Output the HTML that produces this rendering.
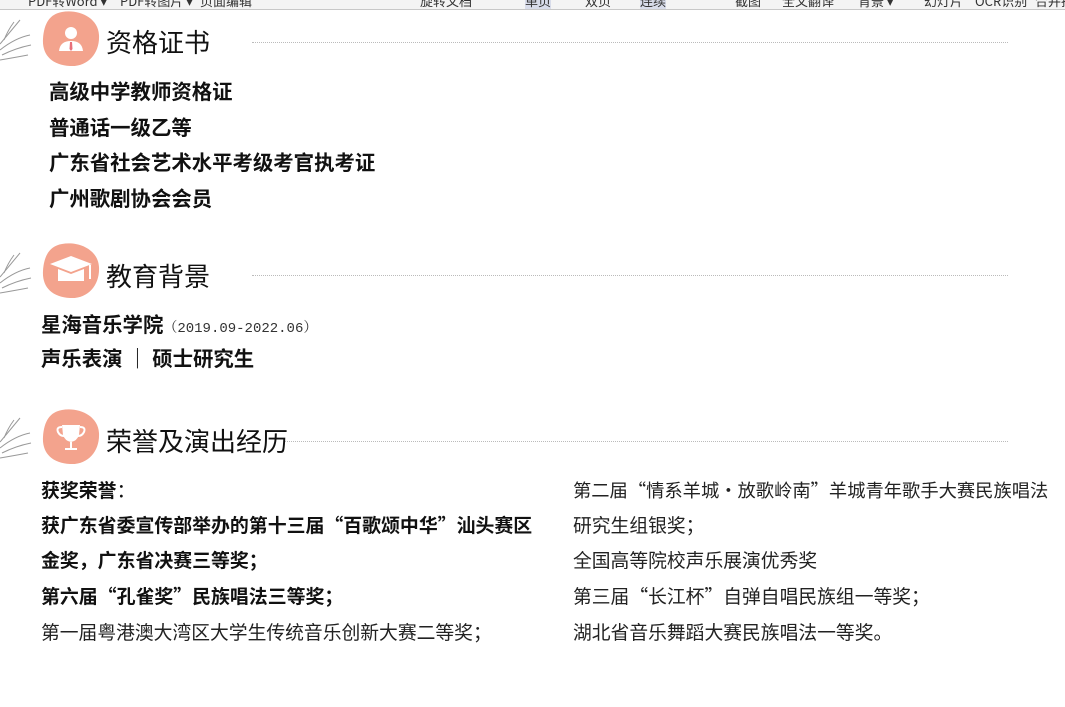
<!DOCTYPE html>
<html><head><meta charset="utf-8"><style>
*{margin:0;padding:0;box-sizing:border-box}
body{width:1065px;height:707px;background:#fff;position:relative;overflow:hidden;font-family:"Noto Sans CJK SC","Liberation Sans",sans-serif;color:#111}
.tb{position:absolute;left:0;top:0;width:1065px;height:10px;background:#f4f4f4;border-bottom:1px solid #c8c8c8;overflow:hidden}
.tb span{position:absolute;top:-9px;font-size:13px;color:#333;white-space:nowrap}
.a{position:absolute;white-space:nowrap}
.t{font-size:26px;color:#111;line-height:30px}
.dl{position:absolute;height:0;border-top:1px dotted #bbb}
.b{font-weight:bold;font-size:20.4px;line-height:24px}
.b2{font-weight:bold;font-size:18.9px;line-height:24px}
.r{font-size:18.8px;line-height:24px;color:#222}
.blob{position:absolute;width:58px;height:56px}
</style></head><body>
<div class="tb">
<span style="left:28px">PDF转Word ▾</span><span style="left:120px">PDF转图片 ▾</span><span style="left:200px">页面编辑</span>
<span style="left:420px">旋转文档</span><span style="left:525px;background:#d8dcea">单页</span><span style="left:585px">双页</span><span style="left:640px;background:#d8dcea">连续</span>
<span style="left:735px">截图</span><span style="left:782px">全文翻译</span><span style="left:858px">背景 ▾</span><span style="left:924px">幻灯片</span><span style="left:975px">OCR识别</span><span style="left:1035px">合并拆分</span>
</div>

<svg class="a" style="left:0;top:0" width="40" height="707" fill="none" stroke="#999" stroke-width="1">
<g><path d="M0 50 Q15 38 30 35"/><path d="M2 55 Q16 48 31 45"/><path d="M0 44 Q10 32 20 20"/><path d="M0 60 Q12 58 28 55"/><path d="M4 40 Q8 30 14 22"/></g>
<g transform="translate(0,233)"><path d="M0 50 Q15 38 30 35"/><path d="M2 55 Q16 48 31 45"/><path d="M0 44 Q10 32 20 20"/><path d="M0 60 Q12 58 28 55"/><path d="M4 40 Q8 30 14 22"/></g>
<g transform="translate(0,398)"><path d="M0 50 Q15 38 30 35"/><path d="M2 55 Q16 48 31 45"/><path d="M0 44 Q10 32 20 20"/><path d="M0 60 Q12 58 28 55"/><path d="M4 40 Q8 30 14 22"/></g>
</svg>

<svg class="blob" style="left:42px;top:11px" viewBox="0 0 58 56"><path d="M20 1 C36 -2 56 6 57 24 C58 42 46 56 28 55 C10 54 0 44 1 28 C2 12 8 3 20 1Z" fill="#f3a38d"/>
<circle cx="29" cy="22" r="6" fill="#fff"/><path d="M17 40 Q18 30 29 30 Q40 30 41 40Z" fill="#fff"/><path d="M28 31 L30 31 L30.5 38 L29 40 L27.5 38Z" fill="#e8707a"/></svg>
<div class="a t" style="left:106px;top:27px">资格证书</div>
<div class="dl" style="left:252px;top:42px;width:756px"></div>
<div class="a b" style="left:49px;top:78px">高级中学教师资格证</div>
<div class="a b" style="left:49px;top:114px">普通话一级乙等</div>
<div class="a b" style="left:49px;top:149px">广东省社会艺术水平考级考官执考证</div>
<div class="a b" style="left:49px;top:185px">广州歌剧协会会员</div>

<svg class="blob" style="left:42px;top:243px" viewBox="0 0 58 56"><path d="M20 1 C36 -2 56 6 57 24 C58 42 46 56 28 55 C10 54 0 44 1 28 C2 12 8 3 20 1Z" fill="#f3a38d"/>
<path d="M8 21 L29 13 L50 21 L29 29Z" fill="#fff"/><path d="M16 26 L16 38 L42 38 L42 26 L29 31Z" fill="#fff"/><path d="M48 22 L48 36" stroke="#fff" stroke-width="2"/></svg>
<div class="a t" style="left:106px;top:261px">教育背景</div>
<div class="dl" style="left:252px;top:275px;width:756px"></div>
<div class="a b" style="left:41px;top:311px">星海音乐学院<span style="font-weight:normal;font-size:14px;font-family:'Liberation Mono','Noto Serif CJK SC',monospace;color:#333">（2019.09-2022.06）</span></div>
<div class="a b" style="left:41px;top:345px">声乐表演 ｜ 硕士研究生</div>

<svg class="blob" style="left:42px;top:409px" viewBox="0 0 58 56"><path d="M20 1 C36 -2 56 6 57 24 C58 42 46 56 28 55 C10 54 0 44 1 28 C2 12 8 3 20 1Z" fill="#f3a38d"/>
<path d="M20 16 L38 16 L37 26 Q35 32 29 33 Q23 32 21 26Z" fill="#fff"/><path d="M20 18 Q14 18 16 23 Q18 27 22 27 M38 18 Q44 18 42 23 Q40 27 36 27" stroke="#fff" stroke-width="2" fill="none"/><rect x="28" y="33" width="2" height="6" fill="#fff"/><rect x="23" y="39" width="12" height="2" fill="#fff"/></svg>
<div class="a t" style="left:106px;top:426px">荣誉及演出经历</div>
<div class="dl" style="left:285px;top:441px;width:723px"></div>

<div class="a b2" style="left:41px;top:478px">获奖荣誉<span style="font-weight:normal">：</span></div>
<div class="a b2" style="left:41px;top:513px">获广东省委宣传部举办的第十三届“百歌颂中华”汕头赛区</div>
<div class="a b2" style="left:41px;top:548px">金奖，广东省决赛三等奖；</div>
<div class="a b2" style="left:41px;top:584px">第六届“孔雀奖”民族唱法三等奖；</div>
<div class="a r" style="left:41px;top:620px">第一届粤港澳大湾区大学生传统音乐创新大赛二等奖；</div>

<div class="a r" style="left:573px;top:478px;font-size:18.3px">第二届“情系羊城·放歌岭南”羊城青年歌手大赛民族唱法</div>
<div class="a r" style="left:573px;top:513px">研究生组银奖；</div>
<div class="a r" style="left:573px;top:548px">全国高等院校声乐展演优秀奖</div>
<div class="a r" style="left:573px;top:584px">第三届“长江杯”自弹自唱民族组一等奖；</div>
<div class="a r" style="left:573px;top:620px">湖北省音乐舞蹈大赛民族唱法一等奖。</div>
</body></html>
